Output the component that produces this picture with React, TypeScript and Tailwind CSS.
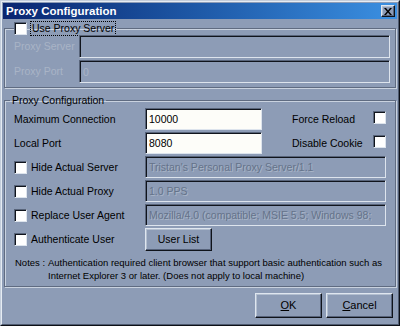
const sunken =
  'border border-t-[#58647a] border-l-[#58647a] border-b-[#dde4ed] border-r-[#dde4ed] shadow-[inset_1px_1px_0_#10141c]'
const raised =
  'border border-t-[#dfe6ef] border-l-[#dfe6ef] border-b-[#0f131a] border-r-[#0f131a] shadow-[inset_-1px_-1px_0_#56627a,inset_1px_1px_0_#b3bfd0]'
const etched =
  'border border-[#5f6b81] shadow-[1px_1px_0_#c9d2df,inset_1px_1px_0_#c9d2df]'

function Checkbox() {
  return <span className={`inline-block shrink-0 w-[13px] h-[13px] bg-white ${sunken}`} />
}

function TextBox({
  value,
  disabled,
  className = '',
}: {
  value: string
  disabled?: boolean
  className?: string
}) {
  return (
    <input
      readOnly
      disabled={disabled}
      defaultValue={value}
      className={`px-[3px] outline-none text-[10.5px] ${sunken} ${
        disabled
          ? 'bg-[#8d9cb6] text-[#65738a] [text-shadow:1px_1px_0_#a9b5c7]'
          : 'bg-[#fdfdf9] text-black'
      } ${className}`}
    />
  )
}

function Button({ children, className = '' }: { children: React.ReactNode; className?: string }) {
  return (
    <button className={`bg-[#8d9cb6] text-black ${raised} ${className}`}>{children}</button>
  )
}

export default function App() {
  return (
    <div className="w-[400px] h-[326px] bg-[#8d9cb6] border border-t-[#c3cddb] border-l-[#c3cddb] border-r-[#0d1017] border-b-[#0d1017] font-['Liberation_Sans',Arial,sans-serif] text-[10.5px] leading-[13px] text-black">
      <div className="h-full flex flex-col p-[1px] border border-t-[#e6ecf3] border-l-[#e6ecf3] border-r-[#4f5b70] border-b-[#4f5b70]">
        {/* Title bar */}
        <div className="h-[16px] flex items-center bg-gradient-to-r from-[#0a2570] to-[#3b90e2]">
          <span className="pl-[3px] text-white font-bold text-[11.5px]">Proxy Configuration</span>
          <span className={`ml-auto mr-[2px] w-[14px] h-[12px] flex items-center justify-center bg-[#8d9cb6] ${raised}`}>
            <svg width="8" height="7" viewBox="0 0 8 7">
              <path d="M0 0h2l2 2.5L6 0h2L5 3.5 8 7H6L4 4.5 2 7H0l3-3.5z" fill="#000" />
            </svg>
          </span>
        </div>

        <div className="px-[1px] pt-[3px] flex flex-col">
          {/* Use proxy server */}
          <fieldset className={`${etched} pl-[9px] pr-[5px] pb-[4px]`}>
            <legend className="ml-0 pr-[2px]">
              <span className="flex items-center gap-[4px]">
                <Checkbox />
                <span className="px-[1px] outline outline-1 outline-dotted outline-black">
                  Use Proxy Server
                </span>
              </span>
            </legend>
            <div className="grid grid-cols-[65px_1fr] gap-y-[2px] items-center">
              <span className="text-[#a9b4c6]">Proxy Server</span>
              <TextBox disabled value="" className="h-[23px]" />
              <span className="text-[#a9b4c6]">Proxy Port</span>
              <TextBox disabled value="0" className="h-[23px] !text-[#a9b4c6] [text-shadow:none]" />
            </div>
          </fieldset>

          {/* Proxy configuration */}
          <fieldset className={`${etched} mt-[6px] pl-[9px] pr-[9px] pt-[1px] pb-[4px]`}>
            <legend className="-ml-[4px] px-[2px]">Proxy Configuration</legend>
            <div className="flex flex-col gap-[2px]">
              <div className="flex items-center h-[22px]">
                <span className="w-[131px]">Maximum Connection</span>
                <TextBox value="10000" className="w-[117px] h-[22px]" />
                <span className="ml-[30px]">Force Reload</span>
                <span className="ml-auto">
                  <Checkbox />
                </span>
              </div>
              <div className="flex items-center h-[22px]">
                <span className="w-[131px]">Local Port</span>
                <TextBox value="8080" className="w-[117px] h-[22px]" />
                <span className="ml-[30px]">Disable Cookie</span>
                <span className="ml-auto">
                  <Checkbox />
                </span>
              </div>
              {[
                ['Hide Actual Server', "Tristan's Personal Proxy Server/1.1"],
                ['Hide Actual Proxy', '1.0 PPS'],
                ['Replace User Agent', 'Mozilla/4.0 (compatible; MSIE 5.5; Windows 98;'],
              ].map(([label, value]) => (
                <div key={label} className="flex items-center h-[22px]">
                  <span className="w-[131px] flex items-center gap-[4px]">
                    <Checkbox />
                    {label}
                  </span>
                  <TextBox disabled value={value} className="flex-1 min-w-0 h-[22px]" />
                </div>
              ))}
              <div className="flex items-center h-[23px]">
                <span className="w-[131px] flex items-center gap-[4px]">
                  <Checkbox />
                  Authenticate User
                </span>
                <Button className="w-[67px] h-[23px]">User List</Button>
              </div>
            </div>

            {/* Notes */}
            <div className="mt-[5px] flex text-[9.5px] leading-[13px]">
              <span className="w-[34px] pl-[1px] shrink-0">Notes :</span>
              <p className="flex-1 pr-[4px] text-justify">
                Authentication required client browser that support basic authentication such as
                Internet Explorer 3 or later. (Does not apply to local machine)
              </p>
            </div>
          </fieldset>

          {/* Buttons */}
          <div className="mt-[6px] flex justify-end gap-[4px] pr-[3px]">
            <Button className="w-[67px] h-[25px] text-[11px]">
              <span className="underline">O</span>K
            </Button>
            <Button className="w-[67px] h-[25px] text-[11px]">
              <span className="underline">C</span>ancel
            </Button>
          </div>
        </div>
      </div>
    </div>
  )
}
